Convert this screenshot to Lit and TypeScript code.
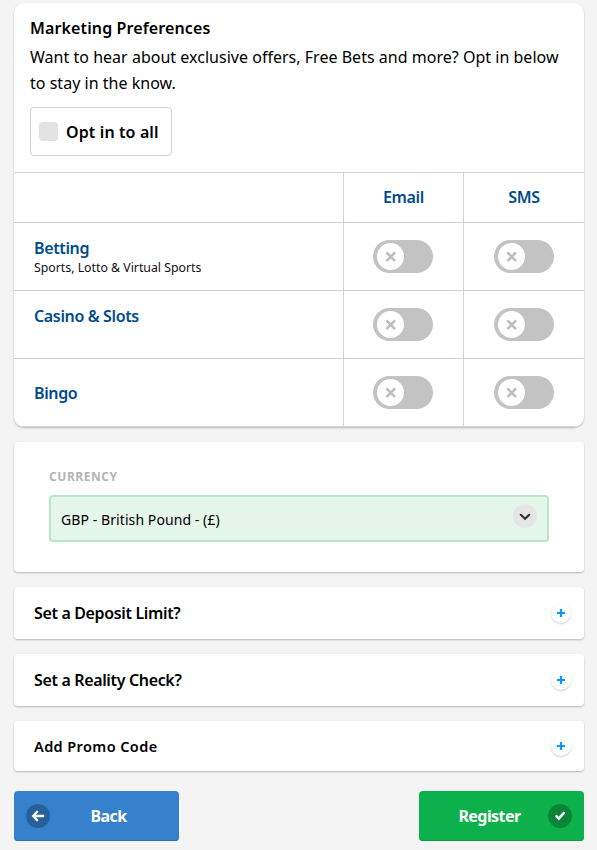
import { LitElement, html, css } from "lit";
import { customElement, property } from "lit/decorators.js";

@customElement("pref-toggle")
class PrefToggle extends LitElement {
  static styles = css`
    :host { display: block; }
    .track { display: flex; align-items: center; box-sizing: border-box; width: 60px; height: 33px; padding-left: 4px; border-radius: 17px; background: #c3c3c3; }
    .knob { width: 27px; height: 27px; border-radius: 50%; background: #fff; }
    svg { display: block; }
  `;
  render() {
    return html`<div class="track" role="switch" aria-checked="false">
      <div class="knob">
        <svg width="27" height="27" viewBox="0 0 27 27" fill="none" stroke="#bdbdbd" stroke-width="2.6" stroke-linecap="round">
          <path d="M10.2 10.2 17.3 17.3M17.3 10.2 10.2 17.3" />
        </svg>
      </div>
    </div>`;
  }
}

@customElement("expand-card")
class ExpandCard extends LitElement {
  @property() label = "";
  static styles = css`
    :host { display: flex; align-items: center; justify-content: space-between; box-sizing: border-box; height: 52px; padding: 0 13px 0 20px; border-radius: 4px; background: #fff; box-shadow: 0 1px 2px rgba(0, 0, 0, 0.26); font-size: 16px; font-weight: 600; letter-spacing: -0.35px; }
    :host([compact]) { height: 50px; }
    :host([compact]) .label { font-size: 14.5px; letter-spacing: 0.4px; }
    .plus { width: 20px; height: 20px; border-radius: 50%; box-shadow: 0 1px 2px rgba(0, 0, 0, 0.2); }
    svg { display: block; }
  `;
  render() {
    return html`<span class="label">${this.label}</span>
      <div class="plus">
        <svg width="20" height="20" viewBox="0 0 20 20" fill="none" stroke="#0d96ff" stroke-width="2.2">
          <path d="M6 10h8M10 6v8" />
        </svg>
      </div>`;
  }
}

@customElement("app-root")
class AppRoot extends LitElement {
  static styles = css`
    :host { display: block; box-sizing: border-box; height: 850px; padding: 3px 13px 0 14px; overflow: hidden; background: #f4f4f4; color: #000; font: 16px/24px "Noto Sans", sans-serif; }
    .prefs { box-sizing: border-box; height: 424px; margin-bottom: 15px; border-radius: 10px; background: #fff; box-shadow: 0 1px 2px rgba(0, 0, 0, 0.25); overflow: hidden; }
    .intro { box-sizing: border-box; height: 169px; padding: 12px 16px 0; }
    h2 { margin: 0; font-size: 16px; line-height: 26px; font-weight: 600; letter-spacing: 0.12px; }
    p { margin: 3px 0 11px; line-height: 26px; letter-spacing: 0.02px; }
    .all { display: inline-flex; align-items: center; gap: 8px; box-sizing: border-box; width: 142px; height: 49px; padding-left: 8px; border: 1px solid #ccd3e2; border-radius: 4px; font-weight: 600; letter-spacing: 0.12px; }
    .box { width: 19px; height: 19px; border-radius: 4px; background: #e3e3e3; }
    .grid { display: grid; grid-template-columns: 329px 120px 121px; grid-template-rows: 50px 68px 68px 69px; color: #004b8d; font-weight: 600; letter-spacing: -0.36px; }
    .cell { display: flex; align-items: center; justify-content: center; border-top: 1px solid #ccd3e2; border-left: 1px solid #ccd3e2; }
    .mid { padding-right: 1px; }
    .head { padding-bottom: 1px; }
    .name { flex-direction: column; align-items: flex-start; padding-left: 20px; border-left: 0; }
    .top { justify-content: flex-start; padding-top: 13px; }
    .note { color: #111; font-size: 12.3px; line-height: 16px; font-weight: 400; letter-spacing: 0; }
    .last { border-bottom: 1px solid #ccd3e2; }
    .currency { box-sizing: border-box; height: 130px; margin-bottom: 15px; padding: 26px 35px 0; border-radius: 4px; background: #fff; box-shadow: 0 1px 2px rgba(0, 0, 0, 0.26); }
    .caption { color: #b4b4b4; font-size: 12px; line-height: 18px; font-weight: 700; letter-spacing: 0.55px; }
    .select { display: flex; justify-content: space-between; box-sizing: border-box; height: 47px; margin-top: 9px; padding: 7px 10px 0; border: 2px solid #b8e8ca; border-radius: 4px; background: #e5f6eb; font-size: 14px; line-height: 32px; letter-spacing: 0.08px; }
    .cards { display: flex; flex-direction: column; gap: 15px; }
    .actions { display: flex; justify-content: space-between; margin-top: 20px; }
    .btn { display: flex; align-items: center; box-sizing: border-box; width: 165px; height: 50px; padding: 0 12px; border-radius: 4px; color: #fff; font-weight: 700; letter-spacing: -0.55px; }
    .btn span { flex: 1; text-align: center; }
    .back { background: #3581cc; box-shadow: inset 0 -1px #2d70b3; }
    .register { background: #0db14b; box-shadow: inset 0 -1px #0c9d43; }
    svg { display: block; }
  `;

  private row(name: string, note = "", top = false, last = false) {
    const end = last ? "last" : "";
    return html`<div class="cell name ${top ? "top" : ""} ${end}">
        <div>${name}</div>
        ${note ? html`<div class="note">${note}</div>` : ""}
      </div>
      <div class="cell mid ${end}"><pref-toggle></pref-toggle></div>
      <div class="cell ${end}"><pref-toggle></pref-toggle></div>`;
  }

  render() {
    return html`
      <section class="prefs">
        <div class="intro">
          <h2>Marketing Preferences</h2>
          <p>Want to hear about exclusive offers, Free Bets and more? Opt in below to stay in the know.</p>
          <div class="all"><div class="box"></div>Opt in to all</div>
        </div>
        <div class="grid">
          <div class="cell name"></div>
          <div class="cell head">Email</div>
          <div class="cell head">SMS</div>
          ${this.row("Betting", "Sports, Lotto & Virtual Sports", true)}
          ${this.row("Casino & Slots", "", true)}
          ${this.row("Bingo", "", false, true)}
        </div>
      </section>
      <section class="currency">
        <div class="caption">CURRENCY</div>
        <div class="select">
          <span>GBP - British Pound - (£)</span>
          <svg width="24" height="24" viewBox="0 0 24 24">
            <circle cx="12" cy="12" r="12" fill="#e5e5e5" />
            <path d="M7.8 10.8 12 14.8l4.2-4" fill="none" stroke="#333" stroke-width="2.2" stroke-linecap="round" />
          </svg>
        </div>
      </section>
      <div class="cards">
        <expand-card label="Set a Deposit Limit?"></expand-card>
        <expand-card label="Set a Reality Check?"></expand-card>
        <expand-card compact label="Add Promo Code"></expand-card>
      </div>
      <div class="actions">
        <div class="btn back" role="button">
          <svg width="24" height="24" viewBox="0 0 24 24">
            <circle cx="12" cy="12" r="12" fill="#286199" />
            <path d="M17.2 12H7.4M11.2 7.8 7.2 12l4 4.2" fill="none" stroke="#fff" stroke-width="2.3" stroke-linecap="round" />
          </svg>
          <span>Back</span>
        </div>
        <div class="btn register" role="button">
          <span>Register</span>
          <svg width="24" height="24" viewBox="0 0 24 24">
            <circle cx="12" cy="12" r="12" fill="#0a8538" />
            <path d="M8.4 12.2 10.8 14.6l4.9-5.4" fill="none" stroke="#fff" stroke-width="2.5" stroke-linecap="round" />
          </svg>
        </div>
      </div>
    `;
  }
}
